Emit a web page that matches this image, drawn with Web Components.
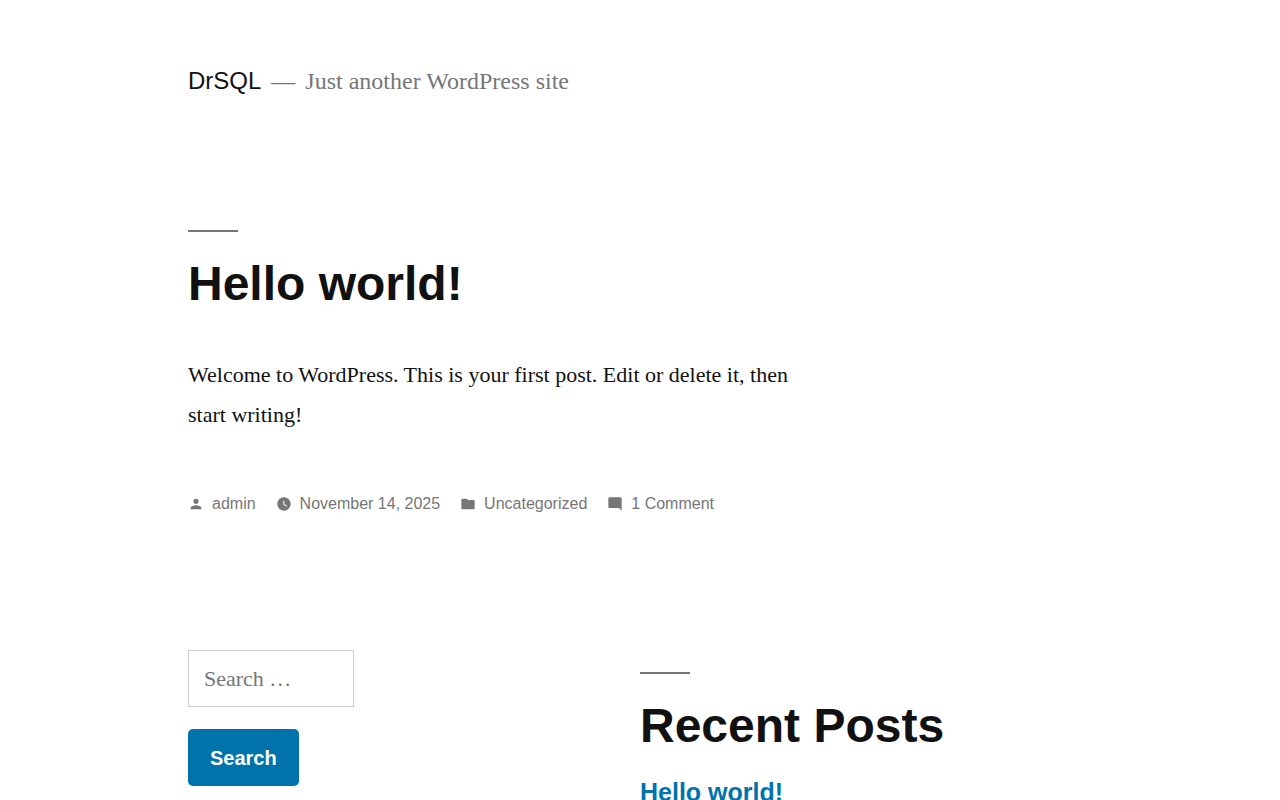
<!DOCTYPE html>
<html lang="en">
<head>
<meta charset="utf-8">
<meta name="viewport" content="width=device-width, initial-scale=1">
<title>DrSQL – Just another WordPress site</title>
<style>
    body {
        margin: 0;
        background: #fff;
        color: #111;
        font: 22px/40px "Liberation Serif", "Times New Roman", serif;
        --sans: "Liberation Sans", Arial, sans-serif;
        --muted: #767676;
        --accent: #0073aa;
    }
</style>
</head>
<body>
<site-page>
    <site-header slot="header" href="#home">
        DrSQL
        <span slot="tagline">Just another WordPress site</span>
    </site-header>

    <blog-post>
        <section-title slot="title" href="#hello-world">Hello world!</section-title>
        Welcome to WordPress. This is your first post. Edit or delete it, then start writing!
        <meta-item slot="meta" icon="person" href="#admin">admin</meta-item>
        <meta-item slot="meta" icon="clock" href="#date">November 14, 2025</meta-item>
        <meta-item slot="meta" icon="folder" href="#uncategorized">Uncategorized</meta-item>
        <meta-item slot="meta" icon="comment" href="#comments">1 Comment</meta-item>
    </blog-post>

    <search-form slot="widgets"></search-form>
    <recent-posts slot="widgets">
        <section-title slot="title">Recent Posts</section-title>
        <post-link href="#hello-world">Hello world!</post-link>
    </recent-posts>
</site-page>

<script>
const icons = {
    person: 'M12 12c2.21 0 4-1.79 4-4s-1.79-4-4-4-4 1.79-4 4 1.79 4 4 4zm0 2c-2.67 0-8 1.34-8 4v2h16v-2c0-2.66-5.33-4-8-4z',
    clock: 'M12 2C6.5 2 2 6.5 2 12s4.5 10 10 10 10-4.5 10-10S17.5 2 12 2zm4.2 14.2L11 13V7h1.5v5.2l4.5 2.7-.8 1.3z',
    folder: 'M10 4H4c-1.1 0-1.99.9-1.99 2L2 18c0 1.1.9 2 2 2h16c1.1 0 2-.9 2-2V8c0-1.1-.9-2-2-2h-8l-2-2z',
    comment: 'M21.99 4c0-1.1-.89-2-1.99-2H4c-1.1 0-2 .9-2 2v12c0 1.1.9 2 2 2h14l4 4-.01-18z'
};

class SitePage extends HTMLElement {
    constructor() {
        super();
        const shadowRoot = this.attachShadow({mode: 'open'});
        shadowRoot.innerHTML = `
            <style>
                :host { display: block; padding: 60px calc(10% + 60px) 0; }
                main { margin-top: 128px; }
                footer { display: grid; grid-template-columns: 1fr 1fr; align-items: start; margin-top: 134px; }
                @media (max-width: 767px) {
                    :host { padding: 24px 16px; }
                    footer { grid-template-columns: 1fr; gap: 32px; }
                }
            </style>
            <slot name="header"></slot>
            <main><slot></slot></main>
            <footer><slot name="widgets"></slot></footer>`;
    }
}

class SiteHeader extends HTMLElement {
    constructor() {
        super();
        const shadowRoot = this.attachShadow({mode: 'open'});
        shadowRoot.innerHTML = `
            <style>
                :host { display: block; font-size: 24px; line-height: 42px; }
                header { display: flex; flex-wrap: wrap; column-gap: 10px; align-items: baseline; }
                a { color: inherit; font-family: var(--sans); text-decoration: none; }
                p { margin: 0; display: flex; gap: 10px; color: var(--muted); }
            </style>
            <header>
                <a><slot></slot></a>
                <p><span>—</span><slot name="tagline"></slot></p>
            </header>`;
        shadowRoot.querySelector('a').href = this.getAttribute('href');
    }
}

class SectionTitle extends HTMLElement {
    constructor() {
        super();
        const href = this.getAttribute('href');
        const shadowRoot = this.attachShadow({mode: 'open'});
        shadowRoot.innerHTML = `
            <style>
                :host { display: block; }
                h2 { margin: 0; font: bold 48px/60px var(--sans); }
                h2::before { content: ""; display: block; width: 50px; height: 2px; margin: 22px 0; background: var(--muted); }
                a { color: inherit; text-decoration: none; }
            </style>
            <h2>${href ? `<a href="${href}"><slot></slot></a>` : '<slot></slot>'}</h2>`;
    }
}

class BlogPost extends HTMLElement {
    constructor() {
        super();
        const shadowRoot = this.attachShadow({mode: 'open'});
        shadowRoot.innerHTML = `
            <style>
                :host { display: block; }
                p { max-width: 624px; margin: 41px 0 57px; }
                .meta { display: flex; flex-wrap: wrap; column-gap: 20px; }
            </style>
            <article>
                <slot name="title"></slot>
                <p><slot></slot></p>
                <div class="meta"><slot name="meta"></slot></div>
            </article>`;
    }
}

class MetaItem extends HTMLElement {
    constructor() {
        super();
        const shadowRoot = this.attachShadow({mode: 'open'});
        shadowRoot.innerHTML = `
            <style>
                :host { display: block; color: var(--muted); font: 16px/24px var(--sans); }
                a { display: flex; align-items: center; gap: 8px; color: inherit; text-decoration: none; }
                svg { width: 16px; height: 16px; fill: currentColor; }
            </style>
            <a>
                <svg viewBox="0 0 24 24" aria-hidden="true"><path d="${icons[this.getAttribute('icon')]}"/></svg>
                <span><slot></slot></span>
            </a>`;
        shadowRoot.querySelector('a').href = this.getAttribute('href');
    }
}

class SearchForm extends HTMLElement {
    constructor() {
        super();
        const shadowRoot = this.attachShadow({mode: 'open'});
        shadowRoot.innerHTML = `
            <style>
                :host { display: block; }
                form { display: flex; flex-direction: column; align-items: flex-start; gap: 22px; }
                label { display: flex; }
                input { box-sizing: border-box; width: 166px; height: 57px; padding: 8px 15px; border: 1px solid #ccc; border-radius: 0; background: #fff; color: inherit; font: inherit; }
                input::placeholder { color: var(--muted); }
                button { height: 57px; padding: 0 22px; border: 0; border-radius: 5px; background: var(--accent); color: #fff; font: bold 20px/24px var(--sans); cursor: pointer; }
            </style>
            <form role="search">
                <label><input type="search" aria-label="Search for:" placeholder="Search …"></label>
                <button type="submit">Search</button>
            </form>`;
    }
}

class RecentPosts extends HTMLElement {
    constructor() {
        super();
        const shadowRoot = this.attachShadow({mode: 'open'});
        shadowRoot.innerHTML = `
            <style>
                :host { display: block; }
                nav { display: flex; flex-direction: column; gap: 16px; }
            </style>
            <nav aria-label="Recent Posts">
                <slot name="title"></slot>
                <slot></slot>
            </nav>`;
    }
}

class PostLink extends HTMLElement {
    constructor() {
        super();
        const shadowRoot = this.attachShadow({mode: 'open'});
        shadowRoot.innerHTML = `
            <style>
                :host { display: block; font: bold 25px/40px var(--sans); }
                a { color: var(--accent); text-decoration: none; }
            </style>
            <a><slot></slot></a>`;
        shadowRoot.querySelector('a').href = this.getAttribute('href');
    }
}

customElements.define('site-page', SitePage);
customElements.define('site-header', SiteHeader);
customElements.define('section-title', SectionTitle);
customElements.define('blog-post', BlogPost);
customElements.define('meta-item', MetaItem);
customElements.define('search-form', SearchForm);
customElements.define('recent-posts', RecentPosts);
customElements.define('post-link', PostLink);
</script>
</body>
</html>
